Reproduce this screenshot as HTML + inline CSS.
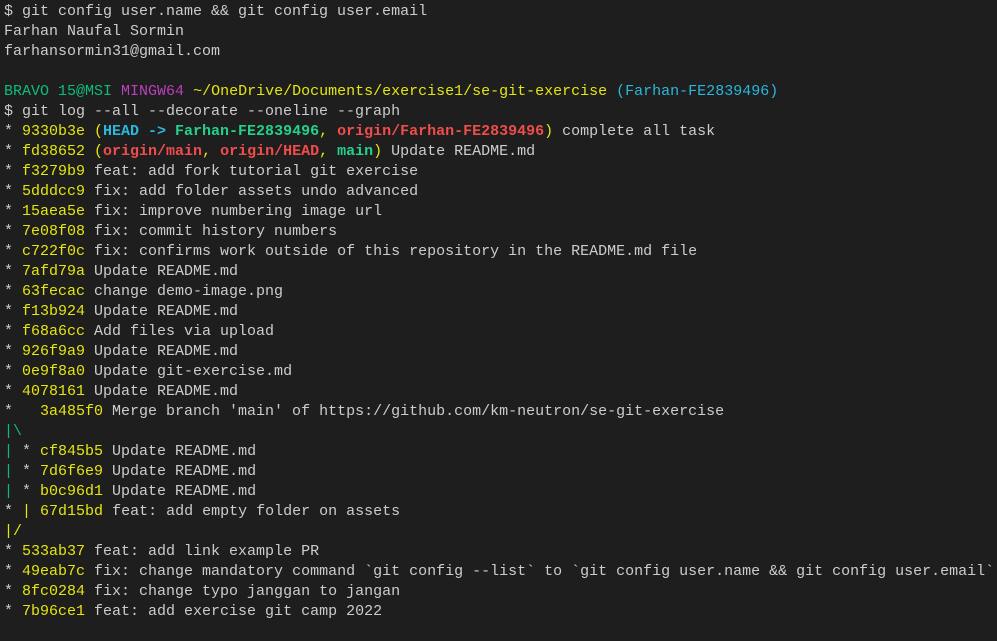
<!DOCTYPE html>
<html><head><meta charset="utf-8"><style>
html,body{margin:0;padding:0;background:#1e1e1e;width:997px;height:641px;overflow:hidden}
pre{margin:0;padding:2px 0 0 4px;font-family:"Liberation Mono",monospace;font-size:15px;line-height:20px;color:#cccccc;white-space:pre}
.y{color:#e5e510}.g{color:#0dbc79}.r{color:#f14c4c;font-weight:bold}.c{color:#29b8db;font-weight:bold}.gb{color:#23d18b;font-weight:bold}.m{color:#bc3fbc}.b{color:#29b8db}
</style></head><body><pre>$ git config user.name &amp;&amp; git config user.email
Farhan Naufal Sormin
farhansormin31@gmail.com

<span class="g">BRAVO 15@MSI</span> <span class="m">MINGW64</span> <span class="y">~/OneDrive/Documents/exercise1/se-git-exercise</span> <span class="b">(Farhan-FE2839496)</span>
$ git log --all --decorate --oneline --graph
* <span class="y">9330b3e (</span><span class="c">HEAD -&gt; </span><span class="gb">Farhan-FE2839496</span><span class="y">, </span><span class="r">origin/Farhan-FE2839496</span><span class="y">)</span> complete all task
* <span class="y">fd38652 (</span><span class="r">origin/main</span><span class="y">, </span><span class="r">origin/HEAD</span><span class="y">, </span><span class="gb">main</span><span class="y">)</span> Update README.md
* <span class="y">f3279b9</span> feat: add fork tutorial git exercise
* <span class="y">5dddcc9</span> fix: add folder assets undo advanced
* <span class="y">15aea5e</span> fix: improve numbering image url
* <span class="y">7e08f08</span> fix: commit history numbers
* <span class="y">c722f0c</span> fix: confirms work outside of this repository in the README.md file
* <span class="y">7afd79a</span> Update README.md
* <span class="y">63fecac</span> change demo-image.png
* <span class="y">f13b924</span> Update README.md
* <span class="y">f68a6cc</span> Add files via upload
* <span class="y">926f9a9</span> Update README.md
* <span class="y">0e9f8a0</span> Update git-exercise.md
* <span class="y">4078161</span> Update README.md
*   <span class="y">3a485f0</span> Merge branch 'main' of https://github.com/km-neutron/se-git-exercise
<span class="g">|</span><span class="g">\</span>
<span class="g">|</span> * <span class="y">cf845b5</span> Update README.md
<span class="g">|</span> * <span class="y">7d6f6e9</span> Update README.md
<span class="g">|</span> * <span class="y">b0c96d1</span> Update README.md
* <span class="y">|</span> <span class="y">67d15bd</span> feat: add empty folder on assets
<span class="y">|/</span>
* <span class="y">533ab37</span> feat: add link example PR
* <span class="y">49eab7c</span> fix: change mandatory command `git config --list` to `git config user.name &amp;&amp; git config user.email`
* <span class="y">8fc0284</span> fix: change typo janggan to jangan
* <span class="y">7b96ce1</span> feat: add exercise git camp 2022
</pre></body></html>
